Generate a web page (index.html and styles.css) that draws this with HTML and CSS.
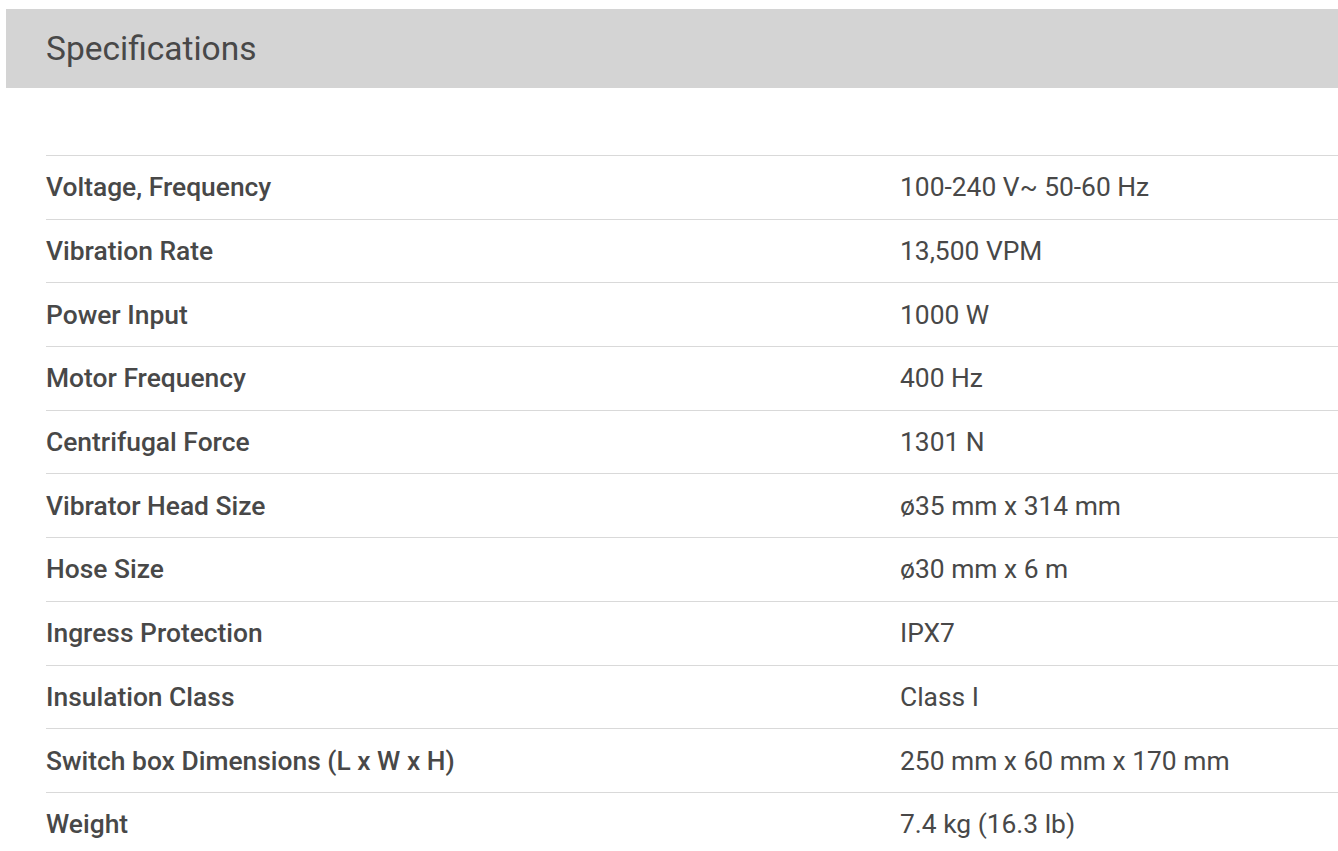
FILE: index.html
```html
<!DOCTYPE html>
<html>
<head>
<meta charset="utf-8">
<link rel="stylesheet" href="styles.css">
</head>
<body>
<div class="page">
  <div class="header"><h2 class="title">Specifications</h2></div>
  <table class="specs">
    <tr><td class="label">Voltage, Frequency</td><td class="value">100-240 V~ 50-60 Hz</td></tr>
    <tr><td class="label">Vibration Rate</td><td class="value">13,500 VPM</td></tr>
    <tr><td class="label">Power Input</td><td class="value">1000 W</td></tr>
    <tr><td class="label">Motor Frequency</td><td class="value">400 Hz</td></tr>
    <tr><td class="label">Centrifugal Force</td><td class="value">1301 N</td></tr>
    <tr><td class="label">Vibrator Head Size</td><td class="value">ø35 mm x 314 mm</td></tr>
    <tr><td class="label">Hose Size</td><td class="value">ø30 mm x 6 m</td></tr>
    <tr><td class="label">Ingress Protection</td><td class="value">IPX7</td></tr>
    <tr><td class="label">Insulation Class</td><td class="value">Class I</td></tr>
    <tr><td class="label">Switch box Dimensions (L x W x H)</td><td class="value">250 mm x 60 mm x 170 mm</td></tr>
    <tr><td class="label">Weight</td><td class="value">7.4 kg (16.3 lb)</td></tr>
  </table>
</div>
</body>
</html>
```
FILE: styles.css
```css
html, body {
  margin: 0;
  padding: 0;
  background: #fff;
  overflow: hidden;
}
body {
  font-family: Roboto, "Liberation Sans", sans-serif;
  color: #484848;
}
.page {
  padding: 9px 0 0 6px;
}
.header {
  background: #d4d4d4;
  height: 79px;
  display: flex;
  align-items: center;
  padding-left: 40px;
}
.title {
  margin: 0;
  font-size: 33.5px;
  font-weight: 400;
  color: #484848;
}
.specs {
  margin: 67px 0 0 40px;
  border-collapse: collapse;
  width: 1300px;
}
.specs td {
  border-top: 1px solid #d9d9d9;
  height: 62.7px;
  padding: 0;
  font-size: 26.4px;
  vertical-align: middle;
}
.specs .label {
  width: 854px;
  font-weight: 500;
}
.specs .value {
  font-weight: 400;
}
```
